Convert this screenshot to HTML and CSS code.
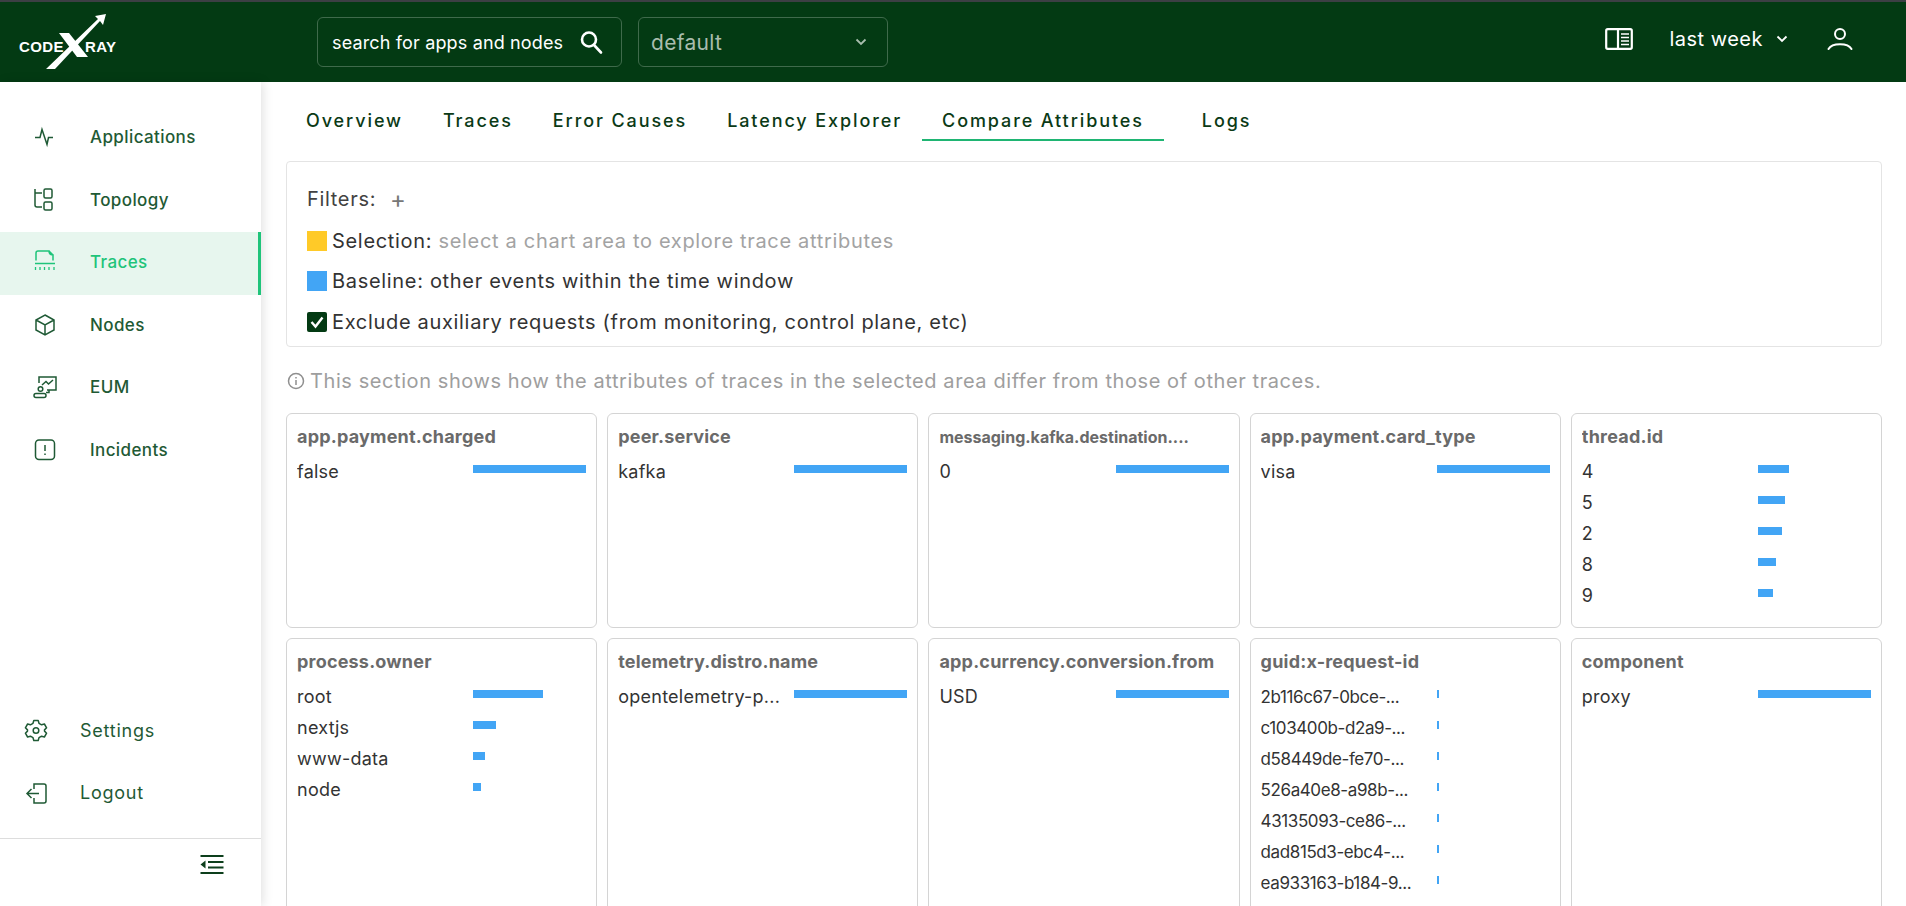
FILE: index.html
```html
<!DOCTYPE html>
<html lang="en">
<head>
    <meta charset="UTF-8">
    <meta name="viewport" content="width=device-width, initial-scale=1.0">
    <title>Compare Attributes</title>
    <link rel="stylesheet" href="styles.css">
</head>
<body>

    <!-- Top bar -->
    <header class="topbar">
        <svg class="logo" width="130" height="80" viewBox="0 0 130 80">
            <text x="19" y="50" class="logo-text">CODE</text>
            <text x="85" y="50" class="logo-text">RAY</text>
            <path d="M59 31 L69 31 L88 55 L77 55 Z" fill="#fff"/>
            <path d="M46 67 L55 67 L100 19 L103 23 L106 12 L95 14 L98 17 Z" fill="#fff"/>
        </svg>
        <div class="search-box">
            <span>search for apps and nodes</span>
            <svg width="26" height="26" viewBox="0 0 26 26" fill="none" stroke="#fff" stroke-width="2.6">
                <circle cx="11" cy="10.5" r="7"/>
                <path d="M16 16 L23 23.5" stroke-linecap="round"/>
            </svg>
        </div>
        <div class="project-select">
            <span>default</span>
            <svg width="12" height="8" viewBox="0 0 12 8" fill="none" stroke="#a9bdae" stroke-width="1.8">
                <path d="M1.5 1.5 L6 6 L10.5 1.5"/>
            </svg>
        </div>
        <div class="topbar-right">
            <svg width="28" height="22" viewBox="0 0 28 22" fill="none" stroke="#fff" stroke-width="2.2">
                <rect x="1.2" y="1.2" width="25.6" height="19.6" rx="1.5"/>
                <path d="M13 1 V21"/>
                <path d="M16 6 H24 M16 9.5 H24 M16 13 H24 M16 16.5 H24" stroke-width="1.6"/>
            </svg>
            <span class="time-label">last week</span>
            <svg class="time-arrow" width="12" height="8" viewBox="0 0 12 8" fill="none" stroke="#fff" stroke-width="1.8">
                <path d="M1.5 1.5 L6 6 L10.5 1.5"/>
            </svg>
            <svg class="user-icon" width="26" height="24" viewBox="0 0 26 24" fill="none" stroke="#fff" stroke-width="2">
                <circle cx="13" cy="7" r="5"/>
                <path d="M1.5 22 C5 15.5 21 15.5 24.5 22" stroke-linecap="round"/>
            </svg>
        </div>
    </header>

    <div class="layout">

        <!-- Sidebar -->
        <aside class="sidebar">
            <nav class="side-nav">
                <a class="side-item" href="#">
                    <svg class="side-icon" viewBox="0 0 24 24"><path d="M2 12.5 H7 L9 4.5 L14 19.5 L15.5 12.5 H20"/></svg>
                    Applications
                </a>
                <a class="side-item" href="#">
                    <svg class="side-icon" viewBox="0 0 24 24">
                        <path d="M2 1 V17 Q2 19 4 19 H9 M2 5 H9"/>
                        <rect x="11" y="1" width="8" height="9" rx="1.5"/>
                        <rect x="11" y="14" width="8" height="8" rx="1.5"/>
                    </svg>
                    Topology
                </a>
                <a class="side-item active" href="#">
                    <svg class="side-icon" viewBox="0 0 24 24">
                        <path d="M3 10.5 V3 Q3 1 5 1 H16 Q16 5 20 5 V10.5 M16 1 L20 5"/>
                        <path d="M2 13.5 H22"/>
                        <path d="M2.5 17 V20 M7 17 V20 M11.5 17 V20 M16 17 V20 M21 17 V20" stroke-width="1.3"/>
                    </svg>
                    Traces
                </a>
                <a class="side-item" href="#">
                    <svg class="side-icon" viewBox="0 0 24 24">
                        <path d="M12 2 L21 7 V17 L12 22 L3 17 V7 Z M3 7 L12 12 L21 7 M12 12 V22"/>
                    </svg>
                    Nodes
                </a>
                <a class="side-item" href="#">
                    <svg class="side-icon" viewBox="0 0 24 24">
                        <path d="M6 8 V2 H23 V15 H14 M16 15 V17.5 H13"/>
                        <path d="M9 10 L13 6.5 L15.5 9 L20 5"/>
                        <circle cx="7.5" cy="14" r="2.3"/>
                        <rect x="1" y="18.5" width="12" height="4" rx="2"/>
                    </svg>
                    EUM
                </a>
                <a class="side-item" href="#">
                    <svg class="side-icon" viewBox="0 0 24 24">
                        <rect x="2.5" y="2" width="19" height="19.5" rx="3.5"/>
                        <path d="M12 7 V13 M12 15.5 V17"/>
                    </svg>
                    Incidents
                </a>
            </nav>

            <nav class="side-nav side-bottom">
                <a class="side-item" href="#">
                    <svg class="side-icon" viewBox="0 0 24 24">
                        <path d="M9.8 2.5 H14.2 L15 5.3 L17.6 6.8 L20.4 6 L22.6 9.8 L20.5 11.9 V13.1 L22.6 15.2 L20.4 19 L17.6 18.2 L15 19.7 L14.2 22.5 H9.8 L9 19.7 L6.4 18.2 L3.6 19 L1.4 15.2 L3.5 13.1 V11.9 L1.4 9.8 L3.6 6 L6.4 6.8 L9 5.3 Z" stroke-linejoin="round"/>
                        <circle cx="12" cy="12.5" r="2.8"/>
                    </svg>
                    Settings
                </a>
                <a class="side-item" href="#">
                    <svg class="side-icon" viewBox="0 0 24 24">
                        <path d="M10 8 V3 H20 Q22 3 22 5 V20 Q22 22 20 22 H10 V17"/>
                        <path d="M15 12.5 H3 M7.5 8 L3 12.5 L7.5 17"/>
                    </svg>
                    Logout
                </a>
            </nav>

            <div class="side-footer">
                <svg width="24" height="20" viewBox="0 0 24 20" fill="#0d3f1c">
                    <rect x="0.5" y="0" width="23" height="2"/>
                    <rect x="8" y="6" width="15.5" height="2"/>
                    <rect x="8" y="11.5" width="15.5" height="2"/>
                    <rect x="0.5" y="17" width="23" height="2"/>
                    <path d="M5.5 5.5 V13.5 L0.5 9.5 Z"/>
                </svg>
            </div>
        </aside>

        <!-- Main content -->
        <main class="content">
            <div class="tabs">
                <a class="tab" href="#">Overview</a>
                <a class="tab" href="#">Traces</a>
                <a class="tab" href="#">Error Causes</a>
                <a class="tab" href="#">Latency Explorer</a>
                <a class="tab active" href="#">Compare Attributes</a>
                <a class="tab" href="#">Logs</a>
            </div>

            <div class="filter-box">
                <div class="filter-row filter-head">Filters: <span class="plus">+</span></div>
                <div class="filter-row">
                    <span class="swatch yellow"></span>
                    <span>Selection: <span class="muted">select a chart area to explore trace attributes</span></span>
                </div>
                <div class="filter-row">
                    <span class="swatch blue"></span>
                    <span>Baseline: other events within the time window</span>
                </div>
                <div class="filter-row">
                    <span class="check">
                        <svg width="20" height="20" viewBox="0 0 20 20" fill="none" stroke="#fff" stroke-width="2.4">
                            <path d="M4.5 10 L8.5 14.5 L15.5 5.5"/>
                        </svg>
                    </span>
                    <span>Exclude auxiliary requests (from monitoring, control plane, etc)</span>
                </div>
            </div>

            <div class="info-line">
                <svg width="18" height="18" viewBox="0 0 18 18" fill="none" stroke="#8f8f8f" stroke-width="1.5">
                    <circle cx="9" cy="9" r="7.5"/>
                    <path d="M9 8 V13 M9 5 V6.5"/>
                </svg>
                This section shows how the attributes of traces in the selected area differ from those of other traces.
            </div>

            <div class="cards">
                <div class="card">
                    <div class="card-title">app.payment.charged</div>
                    <div class="attr"><span class="attr-name">false</span><div class="attr-track"><div class="attr-bar" style="width: 100%"></div></div></div>
                </div>
                <div class="card">
                    <div class="card-title">peer.service</div>
                    <div class="attr"><span class="attr-name">kafka</span><div class="attr-track"><div class="attr-bar" style="width: 100%"></div></div></div>
                </div>
                <div class="card">
                    <div class="card-title long">messaging.kafka.destination....</div>
                    <div class="attr"><span class="attr-name">0</span><div class="attr-track"><div class="attr-bar" style="width: 100%"></div></div></div>
                </div>
                <div class="card">
                    <div class="card-title">app.payment.card_type</div>
                    <div class="attr"><span class="attr-name">visa</span><div class="attr-track"><div class="attr-bar" style="width: 100%"></div></div></div>
                </div>
                <div class="card">
                    <div class="card-title">thread.id</div>
                    <div class="attr"><span class="attr-name">4</span><div class="attr-track"><div class="attr-bar" style="width: 27.5%"></div></div></div>
                    <div class="attr"><span class="attr-name">5</span><div class="attr-track"><div class="attr-bar" style="width: 24%"></div></div></div>
                    <div class="attr"><span class="attr-name">2</span><div class="attr-track"><div class="attr-bar" style="width: 21.5%"></div></div></div>
                    <div class="attr"><span class="attr-name">8</span><div class="attr-track"><div class="attr-bar" style="width: 16%"></div></div></div>
                    <div class="attr"><span class="attr-name">9</span><div class="attr-track"><div class="attr-bar" style="width: 13.5%"></div></div></div>
                </div>

                <div class="card">
                    <div class="card-title">process.owner</div>
                    <div class="attr"><span class="attr-name">root</span><div class="attr-track"><div class="attr-bar" style="width: 62%"></div></div></div>
                    <div class="attr"><span class="attr-name">nextjs</span><div class="attr-track"><div class="attr-bar" style="width: 20%"></div></div></div>
                    <div class="attr"><span class="attr-name">www-data</span><div class="attr-track"><div class="attr-bar" style="width: 10.5%"></div></div></div>
                    <div class="attr"><span class="attr-name">node</span><div class="attr-track"><div class="attr-bar" style="width: 7%"></div></div></div>
                </div>
                <div class="card">
                    <div class="card-title">telemetry.distro.name</div>
                    <div class="attr"><span class="attr-name">opentelemetry-p...</span><div class="attr-track"><div class="attr-bar" style="width: 100%"></div></div></div>
                </div>
                <div class="card">
                    <div class="card-title">app.currency.conversion.from</div>
                    <div class="attr"><span class="attr-name">USD</span><div class="attr-track"><div class="attr-bar" style="width: 100%"></div></div></div>
                </div>
                <div class="card compact">
                    <div class="card-title">guid:x-request-id</div>
                    <div class="attr"><span class="attr-name">2b116c67-0bce-...</span><div class="attr-track"><div class="attr-bar" style="width: 1%"></div></div></div>
                    <div class="attr"><span class="attr-name">c103400b-d2a9-...</span><div class="attr-track"><div class="attr-bar" style="width: 1%"></div></div></div>
                    <div class="attr"><span class="attr-name">d58449de-fe70-...</span><div class="attr-track"><div class="attr-bar" style="width: 1%"></div></div></div>
                    <div class="attr"><span class="attr-name">526a40e8-a98b-...</span><div class="attr-track"><div class="attr-bar" style="width: 1%"></div></div></div>
                    <div class="attr"><span class="attr-name">43135093-ce86-...</span><div class="attr-track"><div class="attr-bar" style="width: 1%"></div></div></div>
                    <div class="attr"><span class="attr-name">dad815d3-ebc4-...</span><div class="attr-track"><div class="attr-bar" style="width: 1%"></div></div></div>
                    <div class="attr"><span class="attr-name">ea933163-b184-9...</span><div class="attr-track"><div class="attr-bar" style="width: 1%"></div></div></div>
                </div>
                <div class="card">
                    <div class="card-title">component</div>
                    <div class="attr"><span class="attr-name">proxy</span><div class="attr-track"><div class="attr-bar" style="width: 100%"></div></div></div>
                </div>
            </div>
        </main>
    </div>

</body>
</html>
```

FILE: styles.css
```css
html, body {
    height: 100%;
    overflow: hidden;
}

body {
    margin: 0;
    font-family: Inter, "Noto Sans", sans-serif;
    background-color: #fff;
    color: #333;
}

a {
    text-decoration: none;
    color: inherit;
}

/* Top bar */
.topbar {
    display: flex;
    align-items: center;
    height: 80px;
    background-color: #033a13;
    border-top: 2px solid #3c3f44;
    color: #fff;
}

.logo {
    flex: none;
    margin-right: 187px;
}

.logo-text {
    font-family: "Liberation Sans", sans-serif;
    font-size: 15px;
    font-weight: 700;
    letter-spacing: 0.4px;
    fill: #fff;
}

.search-box {
    display: flex;
    align-items: center;
    justify-content: space-between;
    width: 305px;
    height: 50px;
    box-sizing: border-box;
    padding: 0 17px 0 14px;
    margin-right: 16px;
    border: 1px solid #3f6a4b;
    border-radius: 6px;
    font-size: 18px;
    letter-spacing: 0.15px;
    white-space: nowrap;
}

.project-select {
    display: flex;
    align-items: center;
    justify-content: space-between;
    width: 250px;
    height: 50px;
    box-sizing: border-box;
    padding: 0 20px 0 12px;
    border: 1px solid #3f6a4b;
    border-radius: 6px;
    font-size: 21px;
    letter-spacing: 0.3px;
    color: #a9bdae;
}

.topbar-right {
    display: flex;
    align-items: center;
    margin-left: auto;
    padding-right: 53px;
    padding-bottom: 6px;
}

.time-label {
    margin-left: 36px;
    font-size: 20px;
    letter-spacing: 0.5px;
}

.time-arrow {
    margin-left: 13px;
}

.user-icon {
    margin-left: 39px;
}

/* Page layout */
.layout {
    display: flex;
    height: calc(100vh - 82px);
}

.sidebar {
    flex: none;
    display: flex;
    flex-direction: column;
    width: 261px;
    background-color: #fff;
    box-shadow: 2px 0 10px rgba(0, 0, 0, 0.12);
    z-index: 1;
}

.side-nav {
    padding-top: 25px;
}

.side-bottom {
    margin-top: auto;
    padding-top: 0;
    padding-bottom: 13px;
}

.side-item {
    display: flex;
    align-items: center;
    gap: 33px;
    height: 62.5px;
    padding: 0 0 2px 33px;
    box-sizing: border-box;
    font-size: 17px;
    font-weight: 500;
    letter-spacing: 0.4px;
    color: #1f5a35;
}

.side-bottom .side-item {
    gap: 32px;
    padding-left: 24px;
    font-weight: 400;
    font-size: 18px;
    letter-spacing: 0.75px;
}

.side-item.active {
    background-color: #e7f6ee;
    border-right: 3px solid #1fc47a;
    color: #1fc47a;
}

.side-icon {
    flex: none;
    width: 24px;
    height: 24px;
    fill: none;
    stroke: #1f5a35;
    stroke-width: 1.5;
}

.side-item.active .side-icon {
    stroke: #1fc47a;
}

.side-footer {
    display: flex;
    justify-content: flex-end;
    height: 68px;
    padding: 16px 37px 0 0;
    box-sizing: border-box;
    border-top: 1px solid #ddd;
}

/* Main content */
.content {
    flex: 1;
    min-width: 0;
    padding: 0 24px 0 25px;
    overflow: hidden;
}

.tabs {
    display: flex;
    height: 59px;
    margin-bottom: 20px;
}

.tab {
    display: flex;
    align-items: center;
    padding: 19px 20px 2px;
    font-size: 18px;
    font-weight: 500;
    letter-spacing: 1.9px;
    color: #0b3a16;
    box-sizing: border-box;
    white-space: nowrap;
}

.tab.active {
    margin-right: 18px;
    border-bottom: 2px solid #1fb573;
    padding-bottom: 0;
}

.filter-box {
    box-sizing: border-box;
    height: 186px;
    padding: 17px 20px 0;
    border: 1px solid #e4e4e4;
    border-radius: 4px;
    font-size: 20px;
    letter-spacing: 0.68px;
}

.filter-row {
    display: flex;
    align-items: center;
    gap: 5px;
    height: 40.5px;
}

.filter-head {
    gap: 10px;
    margin-bottom: 1px;
    color: #424242;
}

.plus {
    color: #777;
    font-size: 24px;
    margin-left: 4px;
}

.muted {
    color: #a3a3a3;
}

.swatch {
    flex: none;
    width: 20px;
    height: 20px;
}

.swatch.yellow {
    background-color: #ffca28;
}

.swatch.blue {
    background-color: #42a5f5;
}

.check {
    flex: none;
    width: 20px;
    height: 20px;
    background-color: #033a13;
    border-radius: 2px;
}

.info-line {
    display: flex;
    align-items: center;
    gap: 5px;
    height: 24px;
    margin: 22px 0 20px 1px;
    font-size: 20px;
    letter-spacing: 0.58px;
    color: #9e9e9e;
}

.cards {
    display: grid;
    grid-template-columns: repeat(5, 1fr);
    grid-template-rows: 215px 340px;
    gap: 10px;
}

.card {
    box-sizing: border-box;
    padding: 11px 10px;
    border: 1px solid #d4d4d4;
    border-radius: 6px;
}

.card-title {
    height: 33px;
    line-height: 24px;
    font-size: 18px;
    font-weight: 700;
    letter-spacing: 0.2px;
    color: #6a6a6a;
    white-space: nowrap;
    overflow: hidden;
}

.card-title.long {
    font-size: 16px;
    letter-spacing: 0;
}

.attr {
    display: flex;
    height: 31px;
    line-height: 28px;
    font-size: 18px;
    letter-spacing: 0.25px;
}

.card.compact .attr {
    font-size: 17px;
    letter-spacing: -0.4px;
}

.attr-name {
    flex: 1;
    min-width: 0;
    white-space: nowrap;
    overflow: hidden;
    text-overflow: ellipsis;
}

.attr-track {
    flex: none;
    width: 113px;
    margin-top: 7px;
}

.attr-bar {
    height: 8px;
    min-width: 2px;
    background-color: #42a5f5;
}
```
